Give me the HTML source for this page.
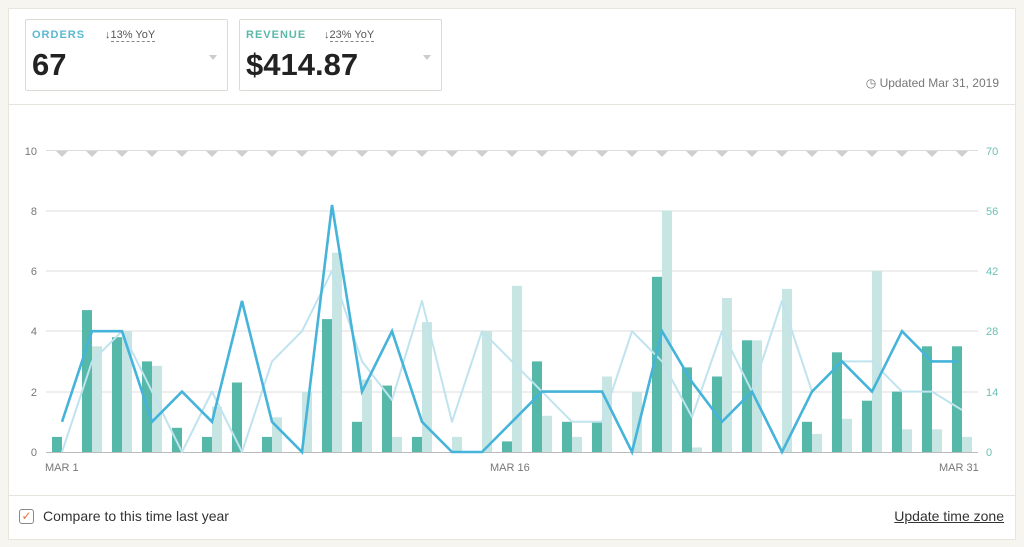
<!DOCTYPE html>
<html><head><meta charset="utf-8"><style>
body{margin:0;width:1024px;height:547px;background:#f6f5ef;font-family:"Liberation Sans",sans-serif;position:relative;overflow:hidden}
.card{position:absolute;left:8px;top:8px;width:1008px;height:532px;background:#fff;border:1px solid #e8e6dc;box-sizing:border-box}
.hdr{position:absolute;left:0;top:0;right:0;height:95px;border-bottom:1px solid #e6e4dc}
.ftr{position:absolute;left:0;bottom:0;right:0;height:43px;border-top:1px solid #e6e4dc}
.m{position:absolute;top:10px;height:72px;border:1px solid #dcdad3;border-radius:2px;box-sizing:border-box}
.lbl{position:absolute;left:6px;top:9px;font-size:11px;font-weight:bold;letter-spacing:1px}
.yoy{position:absolute;top:9px;font-size:11px;color:#555}
.yoy span{border-bottom:1px dashed #888}
.val{position:absolute;left:6px;top:27px;font-size:31px;font-weight:bold;color:#222}
.tri{position:absolute;right:10px;top:35px;width:0;height:0;border-left:4px solid transparent;border-right:4px solid transparent;border-top:5px solid #ccc}
</style></head><body>
<div class="card">
 <div class="hdr">
  <div class="m" style="left:16px;width:203px"><div class="lbl" style="color:#5ab8d0">ORDERS</div><div class="yoy" style="left:79px">↓<span>13% YoY</span></div><div class="val">67</div><div class="tri"></div></div>
  <div class="m" style="left:230px;width:203px"><div class="lbl" style="color:#5ab8a8">REVENUE</div><div class="yoy" style="left:84px">↓<span>23% YoY</span></div><div class="val">$414.87</div><div class="tri"></div></div>
  <div style="position:absolute;right:16px;top:67px;font-size:12px;color:#777">◷ Updated Mar 31, 2019</div>
 </div>
 <div class="ftr">
  <div style="position:absolute;left:10px;top:13px;width:15px;height:15px;border:1px solid #888;border-radius:3px;box-sizing:border-box;color:#e0703a;font-size:12px;line-height:13px;text-align:center">✓</div>
  <div style="position:absolute;left:34px;top:12px;font-size:14px;color:#333">Compare to this time last year</div>
  <div style="position:absolute;right:11px;top:12px;font-size:14px;color:#333;text-decoration:underline">Update time zone</div>
 </div>
</div>
<svg width="1024" height="547" style="position:absolute;left:0;top:0" font-family="Liberation Sans, sans-serif">
<g stroke="#dcdcdc" stroke-width="1">
<line x1="46" x2="978" y1="150.5" y2="150.5"/><line x1="46" x2="978" y1="211" y2="211"/><line x1="46" x2="978" y1="271" y2="271"/><line x1="46" x2="978" y1="331" y2="331"/><line x1="46" x2="978" y1="392" y2="392"/>
</g>
<line x1="46" x2="978" y1="452.5" y2="452.5" stroke="#bbb"/>
<g font-size="11" fill="#777" text-anchor="end">
<text x="37" y="155">10</text><text x="37" y="215">8</text><text x="37" y="275">6</text><text x="37" y="335">4</text><text x="37" y="396">2</text><text x="37" y="456">0</text></g>
<g font-size="11" fill="#6cc0b4"><text x="986" y="155">70</text><text x="986" y="215">56</text><text x="986" y="275">42</text><text x="986" y="335">28</text><text x="986" y="396">14</text><text x="986" y="456">0</text></g>
<g font-size="11" fill="#777"><text x="45" y="471">MAR 1</text><text x="490" y="471">MAR 16</text><text x="939" y="471">MAR 31</text></g>
<g fill="#c7e6e3">
<rect x="92" y="346.3" width="10" height="105.7"/><rect x="122" y="331.2" width="10" height="120.8"/><rect x="152" y="365.9" width="10" height="86.1"/><rect x="212" y="406.7" width="10" height="45.3"/><rect x="272" y="417.3" width="10" height="34.7"/><rect x="302" y="391.6" width="10" height="60.4"/><rect x="332" y="252.7" width="10" height="199.3"/><rect x="362" y="379.5" width="10" height="72.5"/><rect x="392" y="436.9" width="10" height="15.1"/><rect x="422" y="322.1" width="10" height="129.9"/><rect x="452" y="436.9" width="10" height="15.1"/><rect x="482" y="331.2" width="10" height="120.8"/><rect x="512" y="285.9" width="10" height="166.1"/><rect x="542" y="415.8" width="10" height="36.2"/><rect x="572" y="436.9" width="10" height="15.1"/><rect x="602" y="376.5" width="10" height="75.5"/><rect x="632" y="391.6" width="10" height="60.4"/><rect x="662" y="210.4" width="10" height="241.6"/><rect x="692" y="447.5" width="10" height="4.5"/><rect x="722" y="298" width="10" height="154"/><rect x="752" y="340.3" width="10" height="111.7"/><rect x="782" y="288.9" width="10" height="163.1"/><rect x="812" y="433.9" width="10" height="18.1"/><rect x="842" y="418.8" width="10" height="33.2"/><rect x="872" y="270.8" width="10" height="181.2"/><rect x="902" y="429.3" width="10" height="22.7"/><rect x="932" y="429.3" width="10" height="22.7"/><rect x="962" y="436.9" width="10" height="15.1"/>
</g>
<g fill="#55b8a8">
<rect x="52" y="436.9" width="10" height="15.1"/><rect x="82" y="310.1" width="10" height="141.9"/><rect x="112" y="337.2" width="10" height="114.8"/><rect x="142" y="361.4" width="10" height="90.6"/><rect x="172" y="427.8" width="10" height="24.2"/><rect x="202" y="436.9" width="10" height="15.1"/><rect x="232" y="382.5" width="10" height="69.5"/><rect x="262" y="436.9" width="10" height="15.1"/><rect x="322" y="319.1" width="10" height="132.9"/><rect x="352" y="421.8" width="10" height="30.2"/><rect x="382" y="385.6" width="10" height="66.4"/><rect x="412" y="436.9" width="10" height="15.1"/><rect x="502" y="441.4" width="10" height="10.6"/><rect x="532" y="361.4" width="10" height="90.6"/><rect x="562" y="421.8" width="10" height="30.2"/><rect x="592" y="421.8" width="10" height="30.2"/><rect x="652" y="276.8" width="10" height="175.2"/><rect x="682" y="367.4" width="10" height="84.6"/><rect x="712" y="376.5" width="10" height="75.5"/><rect x="742" y="340.3" width="10" height="111.7"/><rect x="802" y="421.8" width="10" height="30.2"/><rect x="832" y="352.3" width="10" height="99.7"/><rect x="862" y="400.7" width="10" height="51.3"/><rect x="892" y="391.6" width="10" height="60.4"/><rect x="922" y="346.3" width="10" height="105.7"/><rect x="952" y="346.3" width="10" height="105.7"/>
</g>
<polyline fill="none" stroke="#bfe3ef" stroke-width="2" stroke-linejoin="round" points="62,452 92,361.4 122,331.2 152,391.6 182,452 212,391.6 242,452 272,361.4 302,331.2 332,270.8 362,361.4 392,400 422,301 452,421.8 482,331.2 512,361.4 542,391.6 572,421.8 602,421.8 632,331.2 662,361.4 692,417 722,331.2 752,391.6 782,301 812,391.6 842,361.4 872,361.4 902,391.6 932,391.6 962,410"/>
<polyline fill="none" stroke="#45b3da" stroke-width="2.6" stroke-linejoin="miter" points="62,421.8 92,331.2 122,331.2 152,421.8 182,391.6 212,421.8 242,301 272,421.8 302,452 332,205 362,391.6 392,331.2 422,421.8 452,452 482,452 512,421.8 542,391.6 572,391.6 602,391.6 632,452 662,331.2 692,382 722,421.8 752,391.6 782,452 812,391.6 842,361.4 872,391.6 902,331.2 932,361.4 958,361.4"/>
<g fill="#cfcfcf">
<path d="M56 151h12l-6 6z"/><path d="M86 151h12l-6 6z"/><path d="M116 151h12l-6 6z"/><path d="M146 151h12l-6 6z"/><path d="M176 151h12l-6 6z"/><path d="M206 151h12l-6 6z"/><path d="M236 151h12l-6 6z"/><path d="M266 151h12l-6 6z"/><path d="M296 151h12l-6 6z"/><path d="M326 151h12l-6 6z"/><path d="M356 151h12l-6 6z"/><path d="M386 151h12l-6 6z"/><path d="M416 151h12l-6 6z"/><path d="M446 151h12l-6 6z"/><path d="M476 151h12l-6 6z"/><path d="M506 151h12l-6 6z"/><path d="M536 151h12l-6 6z"/><path d="M566 151h12l-6 6z"/><path d="M596 151h12l-6 6z"/><path d="M626 151h12l-6 6z"/><path d="M656 151h12l-6 6z"/><path d="M686 151h12l-6 6z"/><path d="M716 151h12l-6 6z"/><path d="M746 151h12l-6 6z"/><path d="M776 151h12l-6 6z"/><path d="M806 151h12l-6 6z"/><path d="M836 151h12l-6 6z"/><path d="M866 151h12l-6 6z"/><path d="M896 151h12l-6 6z"/><path d="M926 151h12l-6 6z"/><path d="M956 151h12l-6 6z"/>
</g>
</svg>
</body></html>
